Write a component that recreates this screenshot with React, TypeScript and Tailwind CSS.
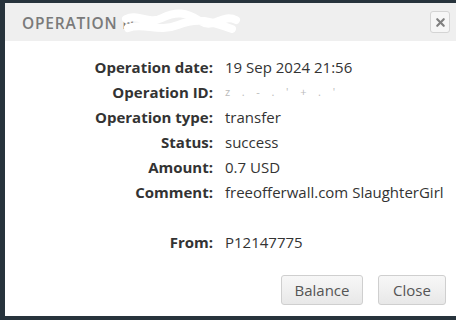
import { X } from "lucide-react";

const rows: [string, string][] = [
  ["Operation date:", "19 Sep 2024 21:56"],
  ["Operation ID:", ""],
  ["Operation type:", "transfer"],
  ["Status:", "success"],
  ["Amount:", "0.7 USD"],
  ["Comment:", "freeofferwall.com SlaughterGirl"],
  ["", ""],
  ["From:", "P12147775"],
];

export default function App() {
  return (
    <div className="w-[456px] h-[320px] overflow-hidden bg-[#27333c] pt-[3px] pl-[5px] font-['Open_Sans',sans-serif]">
      <div className="w-[451px] h-[313px] bg-white rounded-tl-[3px] flex flex-col">
        <div className="h-[38px] bg-[#efefef] flex items-center justify-between pl-[17px] pr-[6px]">
          <div className="relative flex items-center pt-[3px]">
            <span className="text-[15.5px] font-semibold tracking-[0.05em] text-[#7a7a7a]">
              OPERATION N
            </span>
            <svg
              className="absolute left-[98px] top-[-2px]"
              width="124"
              height="32"
              viewBox="0 0 124 32"
            >
              <path
                d="M6 12 C18 6 28 18 42 11 S66 5 80 14 S102 6 116 13 M8 21 C24 15 38 26 58 18 S90 14 112 22"
                stroke="#ffffff"
                strokeWidth="8"
                strokeLinecap="round"
                fill="none"
              />
            </svg>
          </div>
          <button className="w-[20px] h-[22px] flex items-center justify-center border border-[#d4d4d4] rounded-[3px] bg-[#f6f6f6]">
            <X size={13} strokeWidth={4} className="text-[#808080]" />
          </button>
        </div>
        <div className="pt-[14px] grid grid-cols-[208px_1fr] gap-x-[12px] text-[15px] text-[#333]">
          {rows.map(([label, value], i) => (
            <div key={i} className="contents">
              <div className="h-[25px] flex items-center justify-end font-bold">{label}</div>
              <div className="h-[25px] flex items-center">
                {label === "Operation ID:" ? (
                  <span className="text-[#bbb] tracking-[0.4em] text-[11px]">z . - . ' + . '</span>
                ) : (
                  value
                )}
              </div>
            </div>
          ))}
        </div>
        <div className="mt-[20px] flex justify-end gap-[15px] pr-[10px]">
          <button className="w-[82px] h-[30px] rounded-[3px] border border-[#cfcfcf] bg-gradient-to-b from-[#f7f7f7] to-[#e8e8e8] text-[15px] text-[#555]">
            Balance
          </button>
          <button className="w-[68px] h-[30px] rounded-[3px] border border-[#cfcfcf] bg-gradient-to-b from-[#f7f7f7] to-[#e8e8e8] text-[15px] text-[#555]">
            Close
          </button>
        </div>
      </div>
    </div>
  );
}
